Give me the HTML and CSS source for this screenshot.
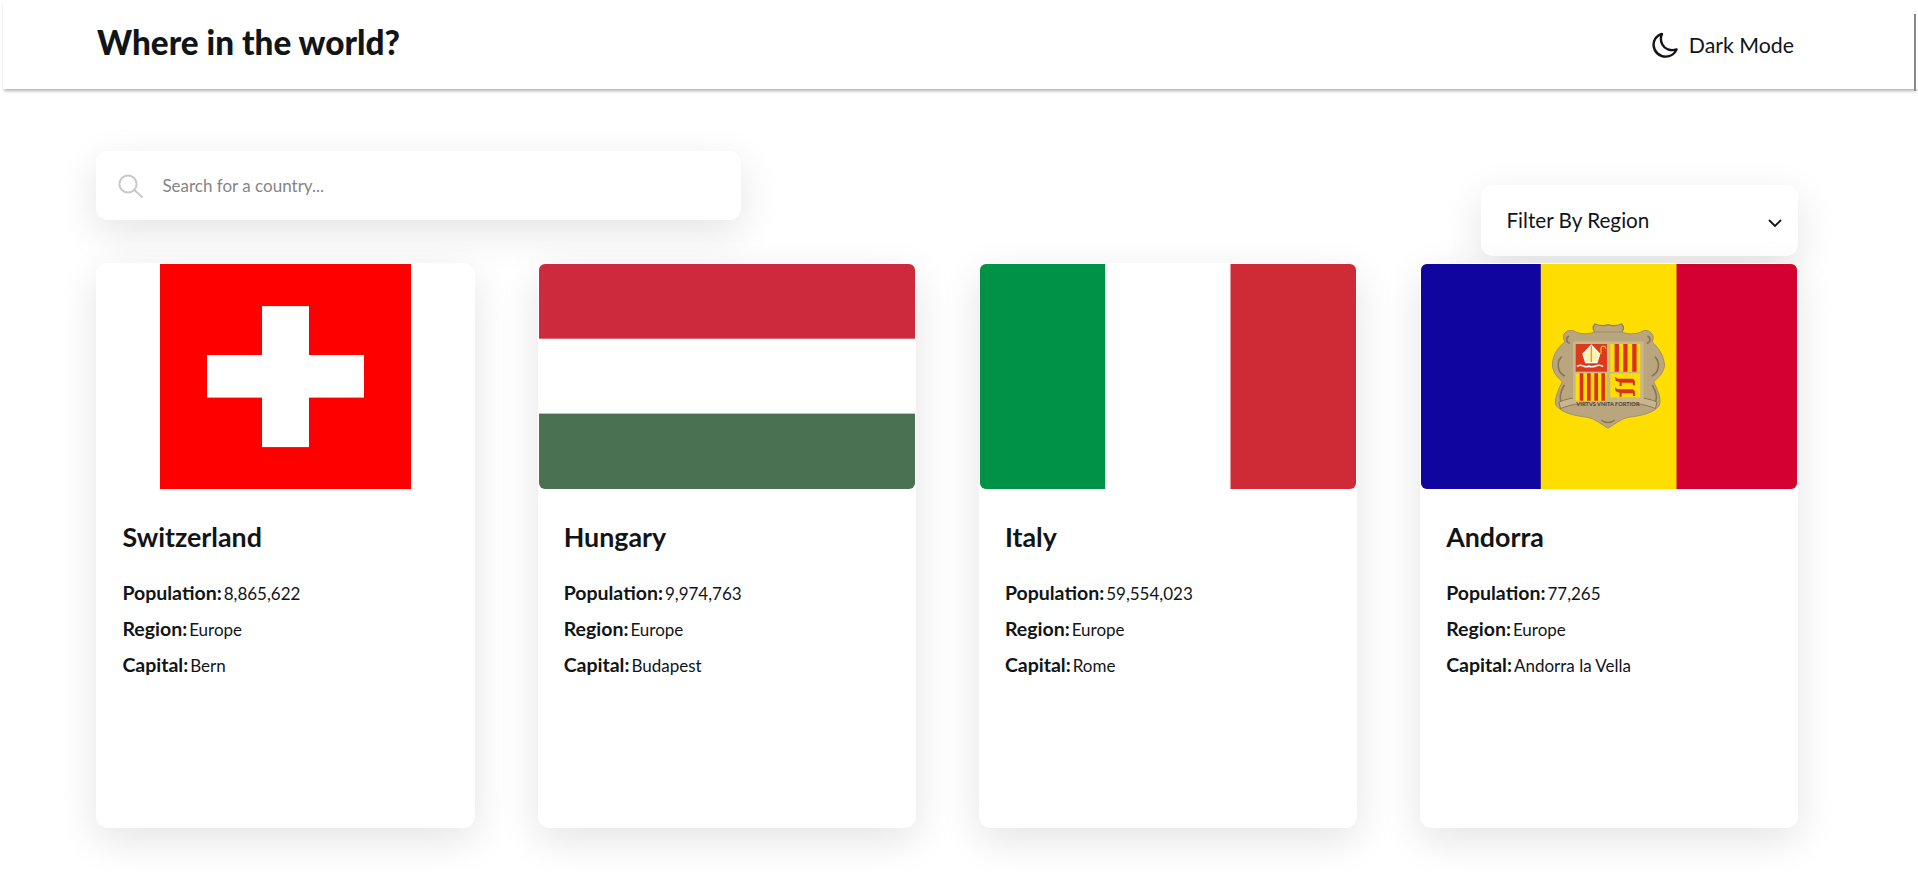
FILE: index.html
```html
<!DOCTYPE html>
<html lang="en">
<head>
    <meta charset="UTF-8">
    <title>Where in the world?</title>
    <link rel="stylesheet" href="styles.css">
</head>
<body>
    <header class="header">
        <h1 class="header-title">Where in the world?</h1>
        <button class="theme-toggle" type="button">
            <svg class="moon-icon" viewBox="0 0 26 26" width="26" height="26" fill="none" stroke="currentColor" stroke-width="2.4" stroke-linejoin="round">
                <path d="M10 2 C3.8 3.6 1.2 9 1.6 13.6 C2.2 20 7.4 24.6 13.6 24.6 C18.6 24.6 23 21.6 24.6 17.4 C18.4 19.4 12.6 17 10.2 12.2 C8.6 9 8.6 5 10 2 Z"/>
            </svg>
            <span>Dark Mode</span>
        </button>
        <div class="header-edge"></div>
    </header>

    <main class="main">
        <section class="controls">
            <label class="search">
                <svg class="search-icon" viewBox="0 0 26 24" width="26" height="24" fill="none" stroke="currentColor" stroke-width="2">
                    <circle cx="10" cy="10" r="8.6"/>
                    <path d="M16.4 16 L24.6 23.4"/>
                </svg>
                <input class="search-input" type="text" placeholder="Search for a country...">
            </label>
            <div class="filter">
                <span>Filter By Region</span>
                <svg class="chevron" viewBox="0 0 14 8" width="14" height="8" fill="none" stroke="currentColor" stroke-width="1.8">
                    <path d="M1 1 L7 7 L13 1"/>
                </svg>
            </div>
        </section>

        <section class="countries">
            <article class="card">
                <div class="flag-frame flag-contain">
                    <svg class="flag" viewBox="0 0 251 225" preserveAspectRatio="none">
                        <rect width="251" height="225" fill="#ff0000"/>
                        <rect x="102" y="42.1" width="47" height="141" fill="#ffffff"/>
                        <rect x="47" y="91" width="157" height="42.6" fill="#ffffff"/>
                    </svg>
                </div>
                <div class="card-body">
                    <h2 class="card-name">Switzerland</h2>
                    <p class="card-row"><strong>Population:</strong><span>8,865,622</span></p>
                    <p class="card-row"><strong>Region:</strong><span>Europe</span></p>
                    <p class="card-row"><strong>Capital:</strong><span>Bern</span></p>
                </div>
            </article>

            <article class="card">
                <div class="flag-frame">
                    <svg class="flag" viewBox="0 0 377 225" preserveAspectRatio="none">
                        <rect width="377" height="225" fill="#ffffff"/>
                        <rect width="377" height="74.7" fill="#cd2a3e"/>
                        <rect y="149.6" width="377" height="75.4" fill="#4a7151"/>
                    </svg>
                </div>
                <div class="card-body">
                    <h2 class="card-name">Hungary</h2>
                    <p class="card-row"><strong>Population:</strong><span>9,974,763</span></p>
                    <p class="card-row"><strong>Region:</strong><span>Europe</span></p>
                    <p class="card-row"><strong>Capital:</strong><span>Budapest</span></p>
                </div>
            </article>

            <article class="card">
                <div class="flag-frame">
                    <svg class="flag" viewBox="0 0 377 225" preserveAspectRatio="none">
                        <rect width="377" height="225" fill="#ffffff"/>
                        <rect width="125.5" height="225" fill="#009246"/>
                        <rect x="251" width="126" height="225" fill="#ce2b37"/>
                    </svg>
                </div>
                <div class="card-body">
                    <h2 class="card-name">Italy</h2>
                    <p class="card-row"><strong>Population:</strong><span>59,554,023</span></p>
                    <p class="card-row"><strong>Region:</strong><span>Europe</span></p>
                    <p class="card-row"><strong>Capital:</strong><span>Rome</span></p>
                </div>
            </article>

            <article class="card">
                <div class="flag-frame">
                    <svg class="flag" viewBox="0 0 377 225" preserveAspectRatio="none">
                        <rect width="377" height="225" fill="#fedd00"/>
                        <rect width="120" height="225" fill="#10069f"/>
                        <rect x="256" width="121" height="225" fill="#d50032"/>
                        <!-- escudo: coordenadas de la ampliacion, escala 1/3 -->
                        <g transform="translate(99 46) scale(0.3333)">
                            <path d="M265 44 C250 50 236 46 226 42 C218 50 220 60 226 68 H306 C312 60 314 50 306 42 C296 46 280 50 265 44 Z" fill="#b9a57e" stroke="#94805a" stroke-width="4"/>
                            <path d="M160 62 C138 58 122 76 136 96 C116 110 98 135 98 165 C100 190 116 205 128 215 C118 235 104 262 108 285 C125 310 170 318 205 322 C228 328 244 342 265 355 C286 342 302 328 325 322 C360 318 405 310 420 285 C426 262 412 235 402 215 C414 205 433 190 435 165 C433 135 414 110 398 96 C408 76 392 58 372 62 C350 76 320 72 306 66 H226 C212 72 182 76 160 62 Z" fill="#b9a57e" stroke="#a48f68" stroke-width="3"/>
                            <path d="M148 78 C136 84 140 98 150 100 M384 78 C396 84 392 98 382 100 M126 140 C108 158 114 190 136 198 M406 140 C424 158 418 190 396 198 M134 225 C122 245 118 262 124 276 M398 225 C410 245 414 262 408 276 M245 330 C255 340 275 340 285 330" fill="none" stroke="#8a7650" stroke-width="5"/>
                            <path d="M122 296 C180 268 350 268 408 296 L412 276 C350 248 180 248 118 276 Z" fill="#c8b690" stroke="#8a7650" stroke-width="3"/>
                            <rect x="160" y="94" width="212" height="186" fill="#c9b78e"/>
                            <rect x="168" y="102" width="94" height="83" fill="#dd3a1c"/>
                            <rect x="272" y="102" width="90" height="83" fill="#fedd00"/>
                            <rect x="168" y="190" width="94" height="82" fill="#fedd00"/>
                            <rect x="272" y="190" width="90" height="72" fill="#fedd00"/>
                            <path d="M285 102 h13 v83 h-13 Z M311 102 h13 v83 h-13 Z M338 102 h13 v83 h-13 Z" fill="#d9301f"/>
                            <path d="M180 190 h11 v82 h-11 Z M202 190 h11 v82 h-11 Z M224 190 h11 v82 h-11 Z M245 190 h11 v82 h-11 Z" fill="#d9301f"/>
                            <path d="M215 106 L240 132 L232 158 H198 L190 132 Z" fill="#fff2b0" stroke="#ffffff" stroke-width="4"/>
                            <path d="M215 108 V156" stroke="#d9a520" stroke-width="4" fill="none"/>
                            <path d="M172 170 C186 156 194 178 208 168 C222 178 236 156 250 170" fill="none" stroke="#ffffff" stroke-width="5"/>
                            <path d="M244 132 V116 C244 106 258 106 258 116" fill="none" stroke="#e8b020" stroke-width="4"/>
                            <path d="M286 200 L294 206 H340 L346 212 V226 H340 V218 H306 V228 H300 V216 L288 212 Z" fill="#d9301f"/>
                            <path d="M286 232 L294 238 H340 L346 244 V258 H340 V250 H306 V260 H300 V248 L288 244 Z" fill="#d9301f"/>
                            <text class="seal-motto" x="265" y="288" text-anchor="middle">VIRTVS VNITA FORTIOR</text>
                        </g>
                    </svg>
                </div>
                <div class="card-body">
                    <h2 class="card-name">Andorra</h2>
                    <p class="card-row"><strong>Population:</strong><span>77,265</span></p>
                    <p class="card-row"><strong>Region:</strong><span>Europe</span></p>
                    <p class="card-row"><strong>Capital:</strong><span>Andorra la Vella</span></p>
                </div>
            </article>
        </section>
    </main>
</body>
</html>
```

FILE: styles.css
```css
* {
    box-sizing: border-box;
}

body {
    margin: 0;
    background-color: #ffffff;
    color: #111517;
    font-family: "Lato", "Open Sans", sans-serif;
}

/* Cabecera */
.header {
    position: relative;
    display: flex;
    align-items: center;
    justify-content: space-between;
    height: 89px;
    margin-left: 3px;
    padding: 0 124px 0 94px;
    background-color: #ffffff;
    box-shadow: 0 3px 3px -1px rgba(0, 0, 0, 0.3);
}

.header-title {
    margin: 0 0 6px;
    font-size: 33.3px;
    font-weight: 900;
}

.theme-toggle {
    display: flex;
    align-items: center;
    gap: 11px;
    padding: 0;
    border: none;
    background: none;
    color: inherit;
    font-family: inherit;
    font-size: 21.3px;
}

.header-edge {
    position: absolute;
    top: 14px;
    right: 2px;
    width: 2px;
    height: 77px;
    background-color: #888888;
}

/* Contenido */
.main {
    padding: 62px 119.6px 44px 96.4px;
}

.controls {
    display: flex;
    align-items: flex-end;
    justify-content: space-between;
}

.search {
    display: flex;
    align-items: center;
    gap: 16px;
    width: 645px;
    height: 69px;
    margin-bottom: 36px;
    padding-left: 22px;
    background-color: #ffffff;
    border-radius: 12px;
    box-shadow: 0 12px 40px rgba(0, 0, 0, 0.11);
}

.search-icon {
    color: #c8c8c8;
    flex-shrink: 0;
}

.search-input {
    flex: 1;
    border: none;
    outline: none;
    background: none;
    font-family: inherit;
    font-size: 17px;
}

.search-input::placeholder {
    color: #858585;
    opacity: 1;
}

.filter {
    display: flex;
    align-items: center;
    justify-content: space-between;
    width: 317px;
    height: 71px;
    padding: 0 16px 2px 25px;
    background-color: #ffffff;
    border-radius: 12px;
    box-shadow: 0 12px 40px rgba(0, 0, 0, 0.11);
    font-size: 20.7px;
}

.chevron {
    margin-top: 6px;
}

.countries {
    display: grid;
    grid-template-columns: repeat(4, 1fr);
    gap: 63px;
    margin-top: 7px;
}

/* Tarjetas de paises */
.card {
    height: 565px;
    padding: 1px;
    background-color: #ffffff;
    border-radius: 12px;
    box-shadow: 0 12px 40px rgba(0, 0, 0, 0.11);
}

.flag-frame {
    height: 225px;
    overflow: hidden;
    border-radius: 6px;
}

.flag-contain {
    display: flex;
    justify-content: center;
    border-radius: 0;
}

.flag {
    display: block;
    width: 100%;
    height: 100%;
}

.flag-contain .flag {
    width: 251px;
}

.seal-motto {
    font-size: 17px;
    font-weight: 700;
    fill: #4d4330;
}

.card-body {
    padding: 32px 25px 0;
}

.card-name {
    margin: 0 0 22px;
    font-size: 26.8px;
    font-weight: 700;
}

.card-row {
    display: flex;
    align-items: baseline;
    gap: 2px;
    height: 36px;
    margin: 0;
    font-size: 17px;
    line-height: 36px;
}

.card-row strong {
    font-size: 19.5px;
}
```
